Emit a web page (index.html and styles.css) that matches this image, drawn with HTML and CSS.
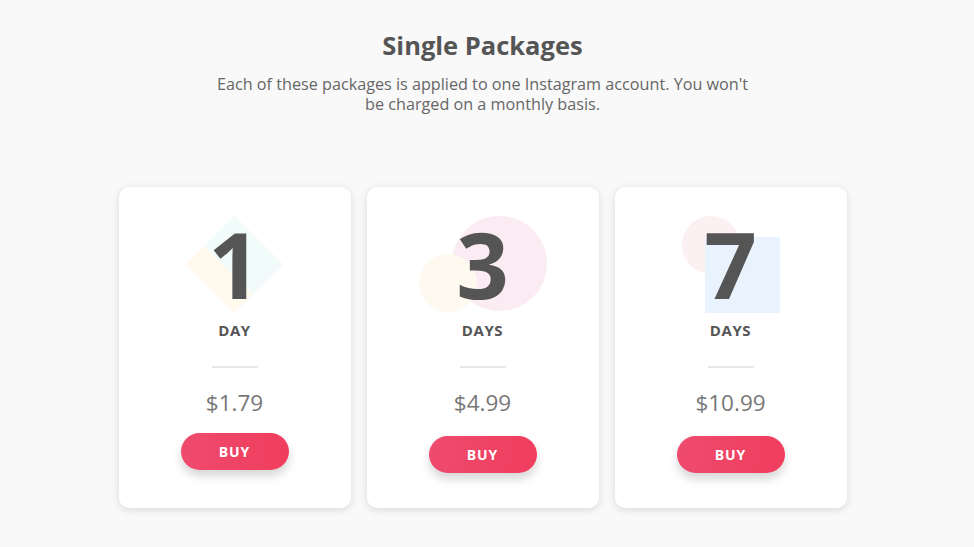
FILE: index.html
```html
<!DOCTYPE html>
<html>
<head>
<meta charset="utf-8">
<link rel="stylesheet" href="styles.css">
</head>
<body>
<main class="page">
  <h1 class="title">Single Packages</h1>
  <p class="subtitle">Each of these packages is applied to one Instagram account. You won't be charged on a monthly basis.</p>
  <section class="cards">
    <article class="card">
      <div class="figure">
        <span class="deco diamond"></span>
        <span class="digit">1</span>
      </div>
      <div class="unit">DAY</div>
      <hr class="divider">
      <div class="price">$1.79</div>
      <button class="buy buy-first">BUY</button>
    </article>
    <article class="card">
      <div class="figure">
        <span class="deco circle-pink-lg"></span>
        <span class="deco circle-cream"></span>
        <span class="digit">3</span>
      </div>
      <div class="unit">DAYS</div>
      <hr class="divider">
      <div class="price">$4.99</div>
      <button class="buy">BUY</button>
    </article>
    <article class="card">
      <div class="figure">
        <span class="deco circle-pink-sm"></span>
        <span class="deco square-blue"></span>
        <span class="digit">7</span>
      </div>
      <div class="unit">DAYS</div>
      <hr class="divider">
      <div class="price">$10.99</div>
      <button class="buy">BUY</button>
    </article>
  </section>
</main>
</body>
</html>
```
FILE: styles.css
```css
* { box-sizing: border-box; }
html, body {
  margin: 0;
  padding: 0;
  background: #f9f9f9;
  font-family: "Open Sans", "Noto Sans", sans-serif;
  color: #555;
}
.page {
  width: 974px;
  height: 547px;
  padding: 29px 9px 0 0;
  display: flex;
  flex-direction: column;
  align-items: center;
}
.title {
  margin: 0;
  font-size: 25.5px;
  line-height: 32px;
  font-weight: 700;
  color: #555;
}
.subtitle {
  margin: 13px 0 0;
  max-width: 550px;
  text-align: center;
  font-size: 16.2px;
  line-height: 20px;
  color: #666;
}
.cards {
  margin-top: 73px;
  display: flex;
  gap: 16px;
}
.card {
  width: 232px;
  height: 321px;
  background: #fff;
  border-radius: 10px;
  box-shadow: 0 2px 8px rgba(0, 0, 0, 0.13);
  padding-top: 31px;
  display: flex;
  flex-direction: column;
  align-items: center;
}
.figure {
  position: relative;
  width: 100%;
  height: 92px;
  display: flex;
  justify-content: center;
}
.digit {
  position: relative;
  font-size: 92px;
  line-height: 92px;
  font-weight: 700;
  color: #555;
}
.deco {
  position: absolute;
  display: block;
}
.diamond {
  width: 69px;
  height: 69px;
  left: calc(50% - 34.5px);
  top: 12px;
  transform: rotate(45deg);
  background: linear-gradient(to top, #fff9ee 0, #fff9ee 38%, #f1fbfa 38%, #f1fbfa 100%);
}
.circle-pink-lg {
  width: 95px;
  height: 95px;
  border-radius: 50%;
  background: #fbecf3;
  left: calc(50% + 16.5px - 47.5px);
  top: -2px;
}
.circle-cream {
  width: 58px;
  height: 58px;
  border-radius: 50%;
  background: #fefaf0;
  left: calc(50% - 34.5px - 29px);
  top: 36px;
}
.circle-pink-sm {
  width: 58px;
  height: 58px;
  border-radius: 50%;
  background: #fcf0f3;
  left: calc(50% - 20px - 29px);
  top: -2px;
}
.square-blue {
  width: 75px;
  height: 76px;
  background: #e8f3fd;
  left: calc(50% - 26px);
  top: 19px;
}
.unit {
  margin-top: 10px;
  font-size: 15px;
  line-height: 20px;
  font-weight: 700;
  letter-spacing: 0.6px;
  color: #555;
}
.divider {
  margin: 26px 0 0;
  width: 46px;
  height: 2px;
  border: 0;
  background: #e8e8e8;
}
.price {
  margin-top: 20px;
  font-size: 22.5px;
  line-height: 30px;
  color: #777;
}
.buy {
  margin-top: 18px;
  width: 108px;
  height: 37px;
  border: 0;
  border-radius: 19px;
  background: linear-gradient(100deg, #ee4b6e 0%, #f03d5d 100%);
  box-shadow: 0 6px 10px rgba(0, 0, 0, 0.16);
  color: #fff;
  font-family: "Open Sans", "Noto Sans", sans-serif;
  font-size: 14px;
  font-weight: 700;
  letter-spacing: 1px;
  cursor: pointer;
}
.buy-first {
  margin-top: 15px;
}
```
